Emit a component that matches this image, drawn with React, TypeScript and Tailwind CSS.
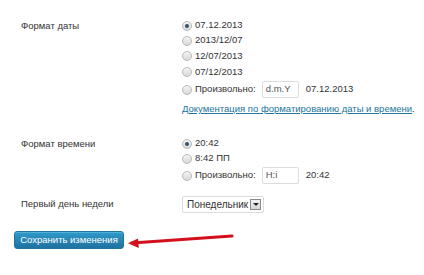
import React from 'react'

const font = { fontFamily: '"Liberation Sans", Arial, sans-serif' }

const Radio = ({ checked }: { checked?: boolean }) => (
  <span className="relative inline-block w-[10px] h-[10px] rounded-full border border-[#b9b9b9] bg-gradient-to-b from-[#f4f4f4] to-[#d9d9d9] shrink-0">
    {checked && <span className="absolute left-[2px] top-[2px] w-[4px] h-[4px] rounded-full bg-[#35506b]" />}
  </span>
)

const Option = ({ checked, children, h = 'h-[15px]' }: { checked?: boolean; children: React.ReactNode; h?: string }) => (
  <div className={`flex items-center gap-[3px] ${h}`}>
    <Radio checked={checked} />
    {children}
  </div>
)

const Field = ({ value }: { value: string }) => (
  <span className="inline-flex items-center h-[17px] w-[37px] px-[3px] border border-[#dcdcdc] bg-white rounded-[2px] text-[#555] ml-[3px] mr-[4px]">
    {value}
  </span>
)

export default function App() {
  return (
    <div className="w-[424px] h-[275px] bg-white text-[9.5px] text-[#333] relative overflow-hidden" style={font}>
      <div className="pt-[18px]">
        {/* Формат даты */}
        <div className="flex">
          <div className="w-[182px] pl-[21px] pt-[1px]">Формат даты</div>
          <div className="flex flex-col">
            <Option checked>07.12.2013</Option>
            <Option>2013/12/07</Option>
            <Option h="h-[16px]">12/07/2013</Option>
            <Option h="h-[16px]">07/12/2013</Option>
            <Option h="h-[19px]">
              <span>Произвольно:</span>
              <Field value="d.m.Y" />
              <span>07.12.2013</span>
            </Option>
            <div className="h-[20px] flex items-center">
              <span className="text-[#21759b] underline">Документация по форматированию даты и времени</span>
              <span>.</span>
            </div>
          </div>
        </div>

        {/* Формат времени */}
        <div className="flex mt-[17px]">
          <div className="w-[182px] pl-[21px] pt-[1px]">Формат времени</div>
          <div className="flex flex-col">
            <Option checked>20:42</Option>
            <Option>8:42 ПП</Option>
            <Option h="h-[19px]">
              <span>Произвольно:</span>
              <Field value="H:i" />
              <span>20:42</span>
            </Option>
          </div>
        </div>

        {/* Первый день недели */}
        <div className="flex items-center mt-[11px]">
          <div className="w-[182px] pl-[21px]">Первый день недели</div>
          <div className="flex items-center h-[17px] border border-[#dcdcdc] rounded-[2px] pl-[4px] pr-[2px] bg-white">
            <span className="text-[#333] text-[10px]">Понедельник</span>
            <span className="ml-[2px] w-[11px] h-[11px] border border-[#8a8a8a] bg-gradient-to-b from-[#f2f2f2] to-[#d6d6d6] flex items-center justify-center">
              <span className="w-0 h-0 border-l-[3px] border-r-[3px] border-t-[3px] border-l-transparent border-r-transparent border-t-[#222]" />
            </span>
          </div>
        </div>

        {/* Сохранить */}
        <div className="flex items-center mt-[18px] pl-[14px]">
          <button className="w-[110px] h-[18px] rounded-[3px] border border-[#21759b] bg-gradient-to-b from-[#2e9bcb] to-[#1f72a0] text-white text-[9.5px] shadow-[0_1px_0_rgba(120,200,230,0.5)_inset]">
            Сохранить изменения
          </button>
        </div>
      </div>

      <svg className="absolute left-[126px] top-[230px]" width="110" height="20" viewBox="0 0 110 20">
        <path d="M6 13 L106 6" stroke="#d4101c" strokeWidth="3" strokeLinecap="round" fill="none" />
        <path d="M2 13.3 L12 8.5 L12.8 18 Z" fill="#d4101c" />
      </svg>
    </div>
  )
}
